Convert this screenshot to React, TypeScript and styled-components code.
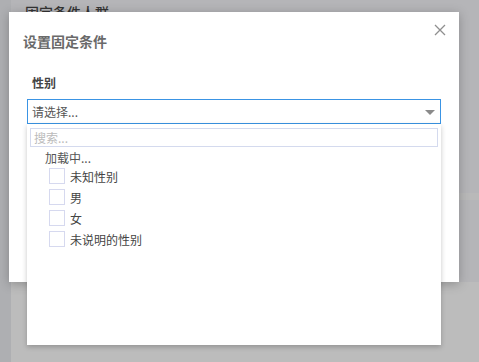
import React from 'react';
import styled, {createGlobalStyle} from "styled-components";

const GlobalStyle = createGlobalStyle`
    html, body {
        margin: 0;
        padding: 0;
    }
    body {
        font-family: "Noto Sans CJK SC", "Noto Sans", sans-serif;
        font-size: 12px;
        color: #333;
    }
`

const options = ["未知性别", "男", "女", "未说明的性别"];

const Checkbox = () => <Box/>;

export default function App() {
    return (
        <Page>
            <GlobalStyle/>
            <SideBar/>
            <Main>
                <PageHeader>
                    <PageTitle>固定条件人群</PageTitle>
                </PageHeader>
                <Band/>
                <Card/>
            </Main>

            <Overlay>
                <Dialog>
                    <DialogHeader>
                        <DialogTitle>设置固定条件</DialogTitle>
                        <CloseButton aria-label="close">
                            <svg width="12" height="12" viewBox="0 0 12 12">
                                <path d="M1 1 L11 11 M11 1 L1 11" stroke="#8f8f8f" strokeWidth="1.3" fill="none"/>
                            </svg>
                        </CloseButton>
                    </DialogHeader>
                    <DialogBody>
                        <FieldLabel>性别</FieldLabel>
                        <SelectWrap>
                            <Select>
                                <SelectValue>请选择...</SelectValue>
                                <Arrow/>
                            </Select>
                            <Dropdown>
                                <SearchInput placeholder="搜索..."/>
                                <Loading>加载中...</Loading>
                                <OptionList>
                                    {options.map(o => (
                                        <Option key={o}>
                                            <Checkbox/>
                                            <span>{o}</span>
                                        </Option>
                                    ))}
                                </OptionList>
                            </Dropdown>
                        </SelectWrap>
                    </DialogBody>
                </Dialog>
            </Overlay>
        </Page>
    );
}

const Page = styled.div`
    position: relative;
    width: 479px;
    height: 362px;
    overflow: hidden;
    display: flex;
    background: #f2f3f6;
`

const SideBar = styled.div`
    width: 11px;
    background: #e9eaee;
`

const Main = styled.div`
    flex: 1;
    display: flex;
    flex-direction: column;
`

const PageHeader = styled.div`
    height: 193px;
    padding: 0 0 0 14px;
`

const PageTitle = styled.div`
    font-size: 14px;
    font-weight: 500;
    color: #3a3a3a;
    line-height: 20px;
    margin-top: 2px;
`

const Band = styled.div`
    height: 7px;
    background: #f8f8f8;
`

const Card = styled.div`
    margin-top: 82px;
    flex: 1;
    background: #fdfdfd;
`

const Overlay = styled.div`
    position: absolute;
    inset: 0;
    background: rgba(40, 40, 40, 0.3);
    padding: 12px 0 0 9px;
`

const Dialog = styled.div`
    width: 450px;
    height: 270px;
    background: #fff;
    box-shadow: 0 2px 10px rgba(0, 0, 0, 0.25);
`

const DialogHeader = styled.div`
    display: flex;
    justify-content: space-between;
    align-items: flex-start;
    padding: 19px 13px 0 14px;
`

const DialogTitle = styled.div`
    font-size: 14px;
    font-weight: 700;
    color: #6a6a6a;
    line-height: 20px;
`

const CloseButton = styled.div`
    width: 12px;
    height: 12px;
    margin-top: -7px;
    display: flex;
`

const DialogBody = styled.div`
    padding: 23px 18px 0 18px;
`

const FieldLabel = styled.div`
    font-size: 12px;
    font-weight: 700;
    color: #444;
    line-height: 17px;
    padding-left: 5px;
    margin-bottom: 8px;
`

const SelectWrap = styled.div`
    position: relative;
`

const Select = styled.div`
    height: 25px;
    box-sizing: border-box;
    border: 1px solid #3a94e4;
    display: flex;
    align-items: center;
    justify-content: space-between;
    padding: 0 5px 0 4px;
`

const SelectValue = styled.span`
    font-size: 12px;
    color: #555;
`

const Arrow = styled.span`
    width: 0;
    height: 0;
    border-left: 5px solid transparent;
    border-right: 5px solid transparent;
    border-top: 5px solid #8a8a8a;
    margin-top: 1px;
`

const Dropdown = styled.div`
    position: absolute;
    left: 0;
    right: 0;
    top: 25px;
    height: 221px;
    background: #fff;
    box-shadow: 0 2px 5px rgba(0, 0, 0, 0.22);
    padding: 4px 3px 0 3px;
    box-sizing: border-box;
    z-index: 2;
`

const SearchInput = styled.input`
    display: block;
    width: 100%;
    height: 19px;
    box-sizing: border-box;
    border: 1px solid #d4daee;
    outline: none;
    padding: 0 3px;
    font-family: inherit;
    font-size: 12px;
    color: #555;

    &::placeholder {
        color: #bbb;
    }
`

const Loading = styled.div`
    font-size: 12px;
    color: #555;
    line-height: 17px;
    padding: 2px 0 0 15px;
`

const OptionList = styled.div`
    display: flex;
    flex-direction: column;
    padding: 2px 0 0 19px;
    gap: 5px;
`

const Option = styled.div`
    display: flex;
    align-items: center;
    gap: 5px;
    height: 16px;
    font-size: 12px;
    color: #444;
`

const Box = styled.span`
    width: 16px;
    height: 16px;
    box-sizing: border-box;
    border: 1px solid #d6d9ef;
    background: #fff;
`
